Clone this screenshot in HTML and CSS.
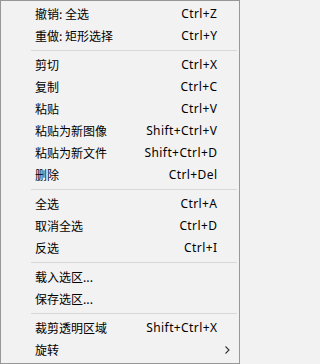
FILE: index.html
```
<!DOCTYPE html>
<html lang="zh">
<head>
<meta charset="utf-8">
<link rel="stylesheet" href="styles.css">
</head>
<body>
<div class="menu">
  <div class="item"><span class="label">撤销: 全选</span><span class="key">Ctrl+Z</span></div>
  <div class="item"><span class="label">重做: 矩形选择</span><span class="key">Ctrl+Y</span></div>
  <div class="sep"></div>
  <div class="item"><span class="label">剪切</span><span class="key">Ctrl+X</span></div>
  <div class="item"><span class="label">复制</span><span class="key">Ctrl+C</span></div>
  <div class="item"><span class="label">粘贴</span><span class="key">Ctrl+V</span></div>
  <div class="item"><span class="label">粘贴为新图像</span><span class="key">Shift+Ctrl+V</span></div>
  <div class="item"><span class="label">粘贴为新文件</span><span class="key">Shift+Ctrl+D</span></div>
  <div class="item"><span class="label">删除</span><span class="key">Ctrl+Del</span></div>
  <div class="sep"></div>
  <div class="item"><span class="label">全选</span><span class="key">Ctrl+A</span></div>
  <div class="item"><span class="label">取消全选</span><span class="key">Ctrl+D</span></div>
  <div class="item"><span class="label">反选</span><span class="key">Ctrl+I</span></div>
  <div class="sep"></div>
  <div class="item"><span class="label">载入选区...</span></div>
  <div class="item"><span class="label">保存选区...</span></div>
  <div class="sep"></div>
  <div class="item"><span class="label">裁剪透明区域</span><span class="key">Shift+Ctrl+X</span></div>
  <div class="item sub"><span class="label">旋转</span><svg class="arrow" width="5" height="8" viewBox="0 0 5 8"><path d="M0.5 0.5 L4 4 L0.5 7.5" fill="none" stroke="#333" stroke-width="1.1"/></svg></div>
</div>
</body>
</html>
```
FILE: styles.css
```
html, body {
  margin: 0;
  padding: 0;
  background: #f2f2f2;
}
.menu {
  box-sizing: border-box;
  width: 240px;
  height: 364px;
  border: 1px solid #979797;
  background: #f2f2f2;
  padding: 2px 2px 3px 2px;
  font-family: "Noto Sans", "Noto Sans CJK SC", sans-serif;
  font-size: 12px;
  color: #000;
}
.item {
  height: 22px;
  display: flex;
  align-items: center;
  justify-content: space-between;
  padding: 0 20px 0 32px;
  line-height: 22px;
}
.item.sub {
  padding-right: 7px;
}
.label {
  font-family: "Noto Sans CJK SC", sans-serif;
}
.key {
  font-family: "Noto Sans", sans-serif;
  letter-spacing: 0.4px;
  margin-right: -0.4px;
}
.arrow {
  display: block;
}
.sep {
  height: 7px;
  display: flex;
  align-items: center;
  padding-left: 28px;
}
.sep::after {
  content: "";
  display: block;
  width: 100%;
  height: 1px;
  background: #d7d7d7;
}
```
